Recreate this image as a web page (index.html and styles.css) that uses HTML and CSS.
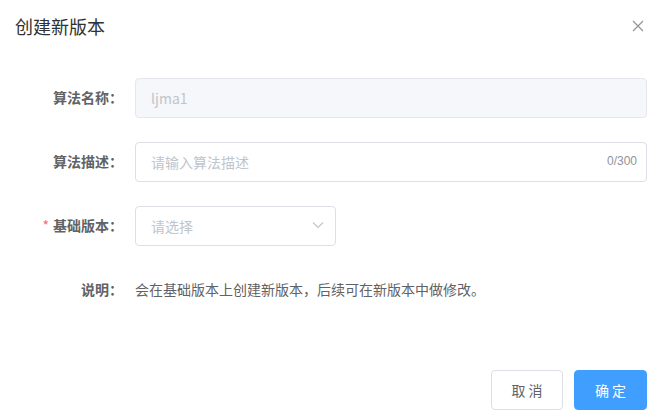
FILE: index.html
```html
<!DOCTYPE html>
<html lang="zh-CN">
<head>
  <meta charset="UTF-8">
  <title>创建新版本</title>
  <link rel="stylesheet" href="styles.css">
</head>
<body>
  <div class="dialog">
    <div class="dialog-header">
      <span class="dialog-title">创建新版本</span>
      <button class="close-btn" aria-label="关闭">
        <svg width="12" height="12" viewBox="0 0 12 12"><path d="M1 1L11 11M11 1L1 11" stroke="#909399" stroke-width="1.2" fill="none"/></svg>
      </button>
    </div>

    <form class="dialog-body">
      <div class="form-item">
        <label class="form-label">算法名称：</label>
        <div class="form-content">
          <input class="input is-disabled" type="text" value="ljma1" disabled>
        </div>
      </div>

      <div class="form-item">
        <label class="form-label">算法描述：</label>
        <div class="form-content">
          <div class="input-wrap">
            <input class="input" type="text" placeholder="请输入算法描述">
            <span class="count">0/300</span>
          </div>
        </div>
      </div>

      <div class="form-item">
        <label class="form-label"><span class="required">*</span>基础版本：</label>
        <div class="form-content">
          <div class="select">
            <input class="input" type="text" placeholder="请选择" readonly>
            <svg class="arrow" width="12" height="8" viewBox="0 0 12 8"><path d="M1 1.5L6 6.5L11 1.5" stroke="#c0c4cc" stroke-width="1.1" fill="none"/></svg>
          </div>
        </div>
      </div>

      <div class="form-item">
        <label class="form-label">说明：</label>
        <div class="form-content note">会在基础版本上创建新版本，后续可在新版本中做修改。</div>
      </div>
    </form>

    <div class="dialog-footer">
      <button class="btn">取 消</button>
      <button class="btn btn-primary">确 定</button>
    </div>
  </div>
</body>
</html>
```

FILE: styles.css
```css
* {
  box-sizing: border-box;
}

body {
  margin: 0;
  background: #fff;
  font-family: "Noto Sans CJK SC", "Noto Sans", sans-serif;
  color: #606266;
}

.dialog {
  width: 658px;
  height: 419px;
  display: flex;
  flex-direction: column;
}

.dialog-header {
  display: flex;
  justify-content: space-between;
  align-items: center;
  padding: 12px 14px 0 15px;
  height: 40px;
}

.dialog-title {
  font-size: 18px;
  color: #303133;
  line-height: 28px;
}

.close-btn {
  border: none;
  background: none;
  padding: 0;
  width: 12px;
  height: 12px;
  display: flex;
}

.dialog-body {
  margin: 0;
  padding: 37px 11px 0 15px;
}

.form-item {
  display: flex;
  margin-bottom: 23px;
}

.form-label {
  width: 120px;
  flex-shrink: 0;
  text-align: right;
  padding-right: 12px;
  font-size: 14px;
  font-weight: bold;
  line-height: 40px;
  color: #606266;
}

.required {
  color: #f56c6c;
  margin-right: 4px;
  font-weight: normal;
}

.form-content {
  flex: 1;
  line-height: 40px;
}

.input {
  width: 100%;
  height: 40px;
  border: 1px solid #dcdfe6;
  border-radius: 4px;
  padding: 0 15px;
  font-family: inherit;
  font-size: 14px;
  color: #606266;
  outline: none;
  background: #fff;
}

.input::placeholder {
  color: #c0c4cc;
}

.input.is-disabled {
  background: #f5f7fa;
  border-color: #e4e7ed;
  color: #c0c4cc;
}

.input-wrap {
  position: relative;
}

.count {
  position: absolute;
  right: 10px;
  top: 0;
  font-size: 12px;
  color: #909399;
  font-family: "Liberation Sans", Arial, sans-serif;
}

.select {
  position: relative;
  width: 201px;
}

.arrow {
  position: absolute;
  right: 12px;
  top: 16px;
}

.note {
  font-size: 14px;
}

.dialog-footer {
  margin-top: auto;
  display: flex;
  justify-content: flex-end;
  gap: 11px;
  padding: 0 11px 9px 0;
}

.btn {
  width: 72px;
  height: 40px;
  border: 1px solid #dcdfe6;
  border-radius: 4px;
  background: #fff;
  color: #606266;
  font-family: inherit;
  font-size: 14px;
}

.btn-primary {
  width: 73px;
  background: #409eff;
  border-color: #409eff;
  color: #fff;
}
```
